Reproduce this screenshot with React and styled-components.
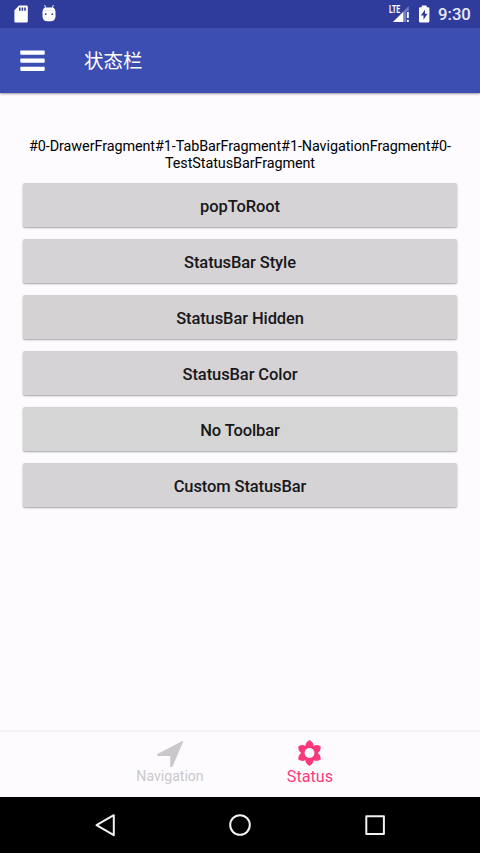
import React from "react";
import styled, { createGlobalStyle } from "styled-components";

const GlobalStyle = createGlobalStyle`
  * { box-sizing: border-box; }
  body { margin: 0; background: #fdfbfe; }
`;

const Screen = styled.div`
  width: 480px;
  height: 853px;
  display: flex;
  flex-direction: column;
  overflow: hidden;
  background: #fdfbfe;
  font-family: Roboto, "Noto Sans CJK SC", sans-serif;
`;

const StatusBar = styled.header`
  height: 28px;
  flex: none;
  display: flex;
  align-items: center;
  justify-content: space-between;
  padding: 0 9px 0 13px;
  background: #303c9b;
  color: #fff;
`;

const StatusGroup = styled.div`
  display: flex;
  align-items: center;
  gap: ${(p) => p.$gap}px;
`;

const Clock = styled.time`
  font-size: 16.7px;
  line-height: 28px;
  font-weight: 500;
  width: 33px;
  white-space: nowrap;
  color: #e9eafa;
  padding-top: 1px;
`;

const Toolbar = styled.div`
  height: 65px;
  flex: none;
  display: flex;
  align-items: center;
  gap: 39px;
  padding-left: 20px;
  background: #3c4eb2;
  box-shadow: 0 1px 2px rgba(0, 0, 0, 0.4);
`;

const MenuButton = styled.button`
  display: flex;
  padding: 0;
  border: 0;
  background: none;
`;

const Title = styled.h1`
  margin: 0;
  padding-top: 2px;
  font-size: 19.5px;
  line-height: 28px;
  font-weight: 400;
  color: #fff;
`;

const Content = styled.main`
  flex: 1;
  display: flex;
  flex-direction: column;
  padding: 45px 23px 0;
`;

const StackLabel = styled.p`
  margin: 0 0 11px;
  font-size: 14.4px;
  letter-spacing: -0.08px;
  line-height: 17px;
  text-align: center;
  color: #000;
`;

const ButtonList = styled.div`
  display: flex;
  flex-direction: column;
  gap: 12px;
`;

const ActionButton = styled.button`
  height: 44px;
  padding: 3px 0 0;
  border: 0;
  border-radius: 2px;
  background: ${(p) => p.$tone};
  box-shadow: 0 1px 2px rgba(0, 0, 0, 0.36);
  font-family: inherit;
  font-size: 16.5px;
  letter-spacing: -0.1px;
  line-height: 20px;
  font-weight: 500;
  color: #18171a;
`;

const TabBar = styled.nav`
  height: 67px;
  flex: none;
  display: flex;
  justify-content: center;
  border-top: 2px solid #f5f3f6;
`;

const Tab = styled.button`
  width: 140px;
  display: flex;
  flex-direction: column;
  align-items: center;
  padding: 7px 0 0;
  border: 0;
  background: none;
  font-family: inherit;
  font-size: ${(p) => (p.$active ? 16.2 : 14.1)}px;
  line-height: ${(p) => (p.$active ? 20 : 18)}px;
  color: ${(p) => (p.$active ? "#f9397d" : "#cac8ca")};
`;

const SystemNav = styled.footer`
  height: 56px;
  flex: none;
  display: flex;
  align-items: center;
  justify-content: center;
  gap: 107px;
  background: #000;
`;

const Icon = styled.svg`
  display: block;
  flex: none;
`;

const SdIcon = () => (
  <Icon width="16" height="18" viewBox="0 0 16 18">
    <path
      fill="#fff"
      fillRule="evenodd"
      d="M6 .5h7.5q1.3 0 1.3 1.3v14.4q0 1.3-1.3 1.3H2.7q-1.3 0-1.3-1.3V5.2ZM6 2.6v3.2h1.6V2.6Zm2.6 0v3.2h1.6V2.6Zm2.6 0v3.2h1.6V2.6Z"
    />
  </Icon>
);

const AndroidIcon = () => (
  <Icon width="16" height="18" viewBox="0 0 16 18">
    <path d="M3.6 0 5 3.4M12.4 0 11 3.4" stroke="#e9eafb" strokeWidth="1" />
    <path
      fill="#fff"
      d="M3.8 2.5h8.4q2.3 1.2 2.3 4.2v4.5q0 5-5 5h-3q-5 0-5-5V6.7Q1.5 3.7 3.8 2.5Z"
    />
    <path d="M2 5.7h12" stroke="#d8daf0" strokeWidth=".7" />
    <circle cx="4.7" cy="9.2" r=".9" fill="#303c9b" />
    <circle cx="11.3" cy="9.2" r=".9" fill="#303c9b" />
  </Icon>
);

const LteText = styled.text`
  font: 700 10px Roboto, sans-serif;
  fill: #fff;
`;

const SignalIcon = () => (
  <Icon width="22" height="20" viewBox="0 0 22 20">
    <path d="M20.8 2v5.2h-2.2V18H5Z" fill="#7480c4" />
    <path d="M15.2 8v10H5Z" fill="#fff" />
    <path d="M18.5 7.5h3V18h-3z" fill="#303c9b" />
    <path d="M19 8h1.8v6H19zM19 15.8h1.8V18H19z" fill="#fff" />
    <LteText x="1" y="9" textLength="11.3" lengthAdjust="spacingAndGlyphs">
      LTE
    </LteText>
  </Icon>
);

const BatteryIcon = () => (
  <Icon width="12" height="18" viewBox="0 0 12 18">
    <path
      fill="#fff"
      d="M3.8.5h4.8v1.8h1.5q1.3 0 1.3 1.2v12.8q0 1.2-1.3 1.2H2.3q-1.3 0-1.3-1.2V3.5q0-1.2 1.3-1.2h1.5Z"
    />
    <path fill="#303c9b" d="M7 4.7 2.8 10.5h2.7v4.2l4.1-5.9H7Z" />
  </Icon>
);

const MenuIcon = () => (
  <Icon width="25" height="22" viewBox="0 0 25 22">
    <g fill="#fff">
      <rect x=".3" y=".5" width="24.4" height="4.2" rx=".8" />
      <rect x=".3" y="8.6" width="24.4" height="4.2" rx=".8" />
      <rect x=".3" y="16.7" width="24.4" height="4.2" rx=".8" />
    </g>
  </Icon>
);

const ArrowIcon = () => (
  <Icon width="28" height="28" viewBox="0 0 28 28">
    <path
      d="M27.1 3 16.6 27.3q-1 2.1-2.4.5V17.1H1.9q-2-1.4 0-2.3L26.4 2.1q1.7-.6.7.9Z"
      fill="#cac8ca"
    />
  </Icon>
);

const FlowerIcon = () => (
  <Icon width="28" height="28" viewBox="-13.5 -14 28 28">
    <g fill="#f9397d">
      {[0, 60, 120, 180, 240, 300].map((angle) => (
        <path
          key={angle}
          transform={`rotate(${angle})`}
          d="M0-13Q4.9-10.3 4-5.8L0 0-4-5.8Q-4.9-10.3 0-13Z"
        />
      ))}
      <circle r="7.7" />
    </g>
    <circle r="4.9" fill="#fdfbfe" />
  </Icon>
);

const SystemIcon = ({ children }) => (
  <Icon
    width="28"
    height="28"
    viewBox="0 0 28 28"
    fill="none"
    stroke="#f2f2f2"
    strokeWidth="2"
    strokeLinejoin="round"
  >
    {children}
  </Icon>
);

const actions = [
  { label: "popToRoot", tone: "#d5d3d6" },
  { label: "StatusBar Style", tone: "#d5d3d6" },
  { label: "StatusBar Hidden", tone: "#d4d2d3" },
  { label: "StatusBar Color", tone: "#d5d3d6" },
  { label: "No Toolbar", tone: "#d5d5d5" },
  { label: "Custom StatusBar", tone: "#d5d3d6" },
];

export default function App() {
  return (
    <Screen>
      <GlobalStyle />
      <StatusBar>
        <StatusGroup $gap={12}>
          <SdIcon />
          <AndroidIcon />
        </StatusGroup>
        <StatusGroup $gap={8}>
          <SignalIcon />
          <BatteryIcon />
          <Clock>9:30</Clock>
        </StatusGroup>
      </StatusBar>
      <Toolbar>
        <MenuButton aria-label="Menu">
          <MenuIcon />
        </MenuButton>
        <Title>状态栏</Title>
      </Toolbar>
      <Content>
        <StackLabel>
          #0-DrawerFragment#1-TabBarFragment#1-NavigationFragment#0-
          <br />
          TestStatusBarFragment
        </StackLabel>
        <ButtonList>
          {actions.map(({ label, tone }) => (
            <ActionButton key={label} $tone={tone}>
              {label}
            </ActionButton>
          ))}
        </ButtonList>
      </Content>
      <TabBar>
        <Tab>
          <ArrowIcon />
          Navigation
        </Tab>
        <Tab $active>
          <FlowerIcon />
          Status
        </Tab>
      </TabBar>
      <SystemNav>
        <SystemIcon>
          <path d="M22.8 4.2v20L5.5 14.2Z" />
        </SystemIcon>
        <SystemIcon>
          <circle cx="14" cy="14" r="9.8" />
        </SystemIcon>
        <SystemIcon>
          <rect x="5.3" y="5.3" width="17.6" height="17.6" />
        </SystemIcon>
      </SystemNav>
    </Screen>
  );
}
